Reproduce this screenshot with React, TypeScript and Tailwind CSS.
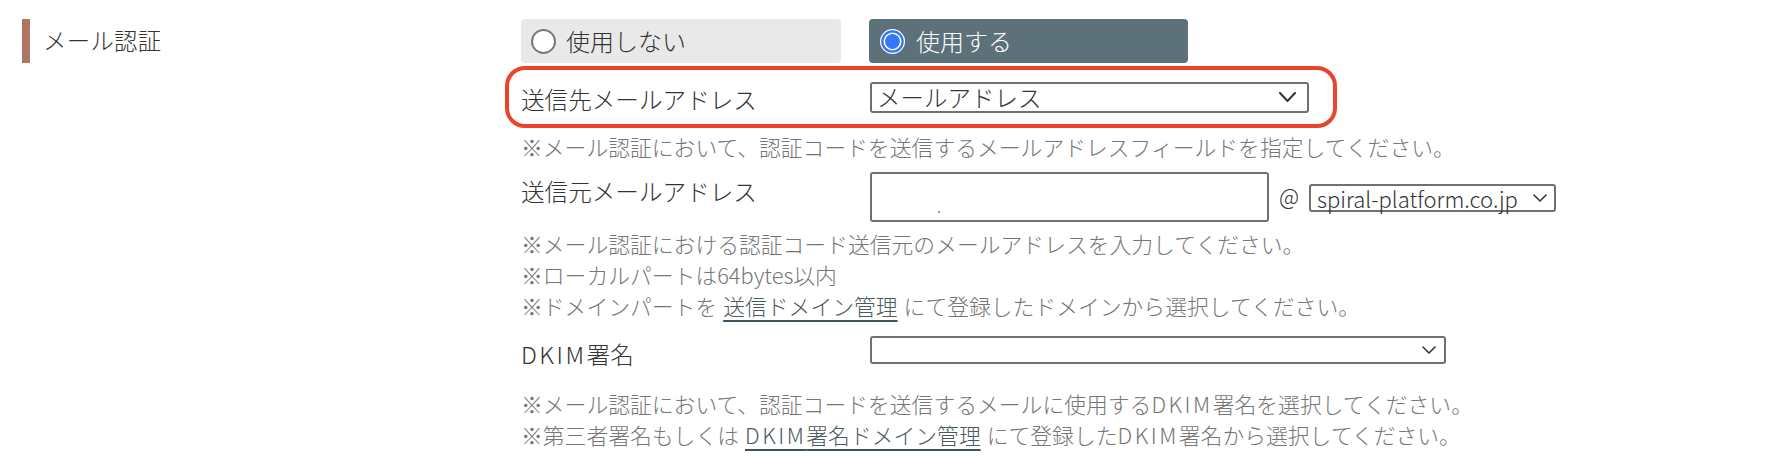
import React from 'react';

const font = { fontFamily: '"Noto Sans CJK JP", "Noto Sans", sans-serif' };

const Chevron = ({ w = 17, h = 9, sw = 2 }: { w?: number; h?: number; sw?: number }) => (
  <svg width={w} height={h + 2} viewBox={`0 0 ${w} ${h + 2}`} fill="none">
    <path d={`M1 1 L${w / 2} ${h} L${w - 1} 1`} stroke="#333" strokeWidth={sw} strokeLinecap="round" strokeLinejoin="round" />
  </svg>
);

const Help = ({ children }: { children: React.ReactNode }) => (
  <p className="text-[21.8px] leading-[31px] text-[#767676] whitespace-nowrap">{children}</p>
);

const Link = ({ children }: { children: React.ReactNode }) => (
  <a className="text-[#4a5a62] underline decoration-[#3f525c] decoration-2 underline-offset-[5px] mx-[6px]">{children}</a>
);

// latin caps sit wider in the original face
const Dkim = () => <span className="tracking-[2.5px]">DKIM</span>;

export default function App() {
  return (
    <div className="w-[1788px] h-[468px] bg-white flex pt-[19px] text-[#333] font-light" style={font}>
      {/* section title */}
      <div className="w-[521px] shrink-0 pl-[22px]">
        <div className="flex items-center h-[44px]">
          <div className="w-[8px] h-[44px] bg-[#b07562]" />
          <span className="ml-[13px] text-[23.4px] tracking-[0.3px]">メール認証</span>
        </div>
      </div>

      <div className="flex flex-col">
        {/* radio choices */}
        <div className="flex gap-[28px]">
          <label className="w-[320px] h-[44px] rounded-[4px] bg-[#e9e9e9] flex items-center pl-[10px] gap-[10px]">
            <span className="w-[25px] h-[25px] rounded-full border-2 border-[#7a7a7a] bg-white" />
            <span className="text-[24px]">使用しない</span>
          </label>
          <label className="w-[319px] h-[44px] rounded-[4px] bg-[#5d717b] flex items-center pl-[11px] gap-[11px] text-white">
            <svg width="25" height="25" viewBox="0 0 25 25">
              <circle cx="12.5" cy="12.5" r="12.5" fill="#fff" />
              <circle cx="12.5" cy="12.5" r="11.3" fill="#3478f6" />
              <circle cx="12.5" cy="12.5" r="9" fill="#fff" />
              <circle cx="12.5" cy="12.5" r="7.4" fill="#3478f6" />
            </svg>
            <span className="text-[24px]">使用する</span>
          </label>
        </div>

        {/* 送信先 */}
        <div className="mt-[3px] -ml-[16px] w-[832px] h-[62px] border-[4px] border-[#e8452a] rounded-[20px] flex items-start pl-[12px] pt-[12px]">
          <span className="w-[349px] pt-[2px] text-[23.6px] leading-[31px]">送信先メールアドレス</span>
          <div className="w-[439px] h-[31px] border-2 border-[#707070] rounded-[3px] flex items-center justify-between pl-[5px] pr-[11px]">
            <span className="text-[23.5px] leading-none">メールアドレス</span>
            <Chevron />
          </div>
        </div>
        <div className="mt-[3px]">
          <Help>※メール認証において、認証コードを送信するメールアドレスフィールドを指定してください。</Help>
        </div>

        {/* 送信元 */}
        <div className="mt-[10px] flex items-start">
          <span className="w-[349px] pt-[4px] text-[23.6px] leading-[31px]">送信元メールアドレス</span>
          <div className="relative w-[399px] h-[50px] border-2 border-[#707070] rounded-[3px] bg-white">
            <span className="absolute left-[66px] top-[37px] w-[2px] h-[2px] bg-[#999]" />
          </div>
          <span className="ml-[10px] mt-[9px] text-[22px] leading-[28px]">@</span>
          <div className="ml-[10px] mt-[12px] w-[247px] h-[28px] border-2 border-[#707070] rounded-[3px] flex items-center justify-between pl-[6px] pr-[7px]">
            <span className="text-[22px] leading-none">spiral-platform.co.jp</span>
            <Chevron w={14} h={7} sw={1.6} />
          </div>
        </div>
        <div className="mt-[6px]">
          <Help>※メール認証における認証コード送信元のメールアドレスを入力してください。</Help>
          <Help>※ローカルパートは64bytes以内</Help>
          <Help>
            ※ドメインパートを<Link>送信ドメイン管理</Link>にて登録したドメインから選択してください。
          </Help>
        </div>

        {/* DKIM */}
        <div className="mt-[15px] flex items-start">
          <span className="w-[349px] pt-[3px] text-[23.6px] leading-[31px]">
            <Dkim />署名
          </span>
          <div className="w-[576px] h-[28px] border-2 border-[#707070] rounded-[3px] flex items-center justify-end pr-[8px]">
            <Chevron w={14} h={7} sw={1.6} />
          </div>
        </div>
        <div className="mt-[18px]">
          <Help>
            ※メール認証において、認証コードを送信するメールに使用する<Dkim />署名を選択してください。
          </Help>
          <Help>
            ※第三者署名もしくは<Link><Dkim />署名ドメイン管理</Link>にて登録した<Dkim />署名から選択してください。
          </Help>
        </div>
      </div>
    </div>
  );
}
